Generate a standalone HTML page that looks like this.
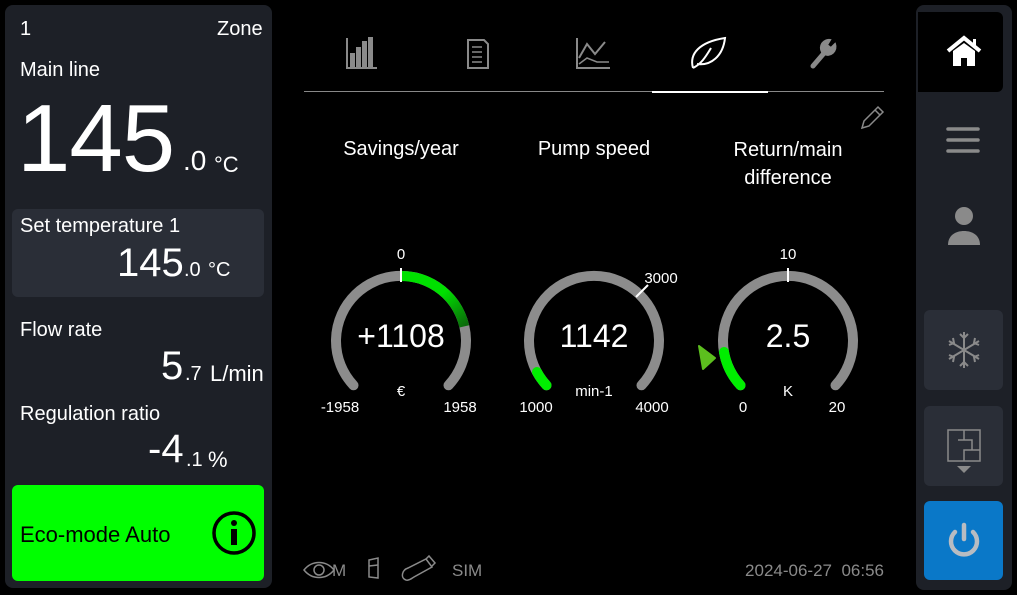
<!DOCTYPE html>
<html><head><meta charset="utf-8"><style>
*{margin:0;padding:0;box-sizing:border-box}
body{width:1017px;height:595px;background:#000;font-family:"Liberation Sans","DejaVu Sans",sans-serif;color:#fff;position:relative;overflow:hidden}
.a{position:absolute;white-space:nowrap}
#left{position:absolute;left:5px;top:5px;width:267px;height:583px;background:#1d2027;border-radius:8px}
#set{position:absolute;left:12px;top:209px;width:252px;height:88px;background:#2a2e37;border-radius:6px}
#eco{position:absolute;left:12px;top:485px;width:252px;height:96px;background:#00ff00;border-radius:6px}
#side{position:absolute;left:916px;top:5px;width:96px;height:585px;background:#1d2027;border-radius:8px}
.btn{position:absolute;left:924px;width:79px;height:80px;background:#2a2e37;border-radius:6px}
</style></head><body>
<div id="left"></div>
<div class="a" style="left:20px;top:18px;font-size:20px">1</div>
<div class="a" style="left:217px;top:18px;font-size:20px">Zone</div>
<div class="a" style="left:20px;top:59px;font-size:20px">Main line</div>
<div class="a" style="left:17px;top:84px;font-size:96px;letter-spacing:-1px;line-height:110px">145</div>
<div class="a" style="left:183px;top:145px;font-size:28px">.0</div>
<div class="a" style="left:214px;top:152px;font-size:22px">°C</div>
<div id="set"></div>
<div class="a" style="left:20px;top:215px;font-size:20px">Set temperature 1</div>
<div class="a" style="left:117px;top:241px;font-size:40px">145</div>
<div class="a" style="left:184px;top:259px;font-size:20px">.0</div>
<div class="a" style="left:208px;top:259px;font-size:20px">°C</div>
<div class="a" style="left:20px;top:319px;font-size:20px">Flow rate</div>
<div class="a" style="left:161px;top:344px;font-size:40px">5</div>
<div class="a" style="left:185px;top:363px;font-size:20px">.7</div>
<div class="a" style="left:210px;top:361px;font-size:22px">L/min</div>
<div class="a" style="left:20px;top:403px;font-size:20px">Regulation ratio</div>
<div class="a" style="left:148px;top:427px;font-size:40px">-4</div>
<div class="a" style="left:186px;top:449px;font-size:20px">.1</div>
<div class="a" style="left:208px;top:447px;font-size:22px">%</div>
<div id="eco"></div>
<div class="a" style="left:20px;top:522px;font-size:22px;color:#000">Eco-mode Auto</div>
<svg class="a" style="left:211px;top:510px" width="46" height="46"><circle cx="23" cy="23" r="20" fill="none" stroke="#000" stroke-width="3.5"/><circle cx="23" cy="13" r="3" fill="#000"/><rect x="20" y="19" width="6" height="16" fill="#000"/></svg>

<svg class="a" style="left:300px;top:30px" width="600" height="70" fill="none" stroke="#8a8a8a" stroke-width="2">
<path d="M47 8V38H77" /><rect x="51" y="24" width="3" height="12" fill="#8a8a8a"/><rect x="57" y="18" width="3" height="18" fill="#8a8a8a"/><rect x="63" y="12" width="3" height="24" fill="#8a8a8a"/><rect x="69" y="8" width="3" height="28" fill="#8a8a8a"/>
<path d="M168 10h16l4 4v24h-20z" /><path d="M172 17h10M172 22h10M172 27h10M172 32h10" stroke-width="1.5"/>
<path d="M277 8V38H310" /><path d="M279 28l8-14 8 10 10-12" /><path d="M279 34l8-6 10 4 12 0" stroke-width="1.5"/>
<path d="M393 38c8-4 12-10 18-20M393 38c-4-14 6-26 32-30c-2 18-14 28-28 26" stroke="#fff"/>
<path d="M513 36l12-14" stroke-width="5" stroke-linecap="round"/><path d="M522 22a8 8 0 0 1 8-12l-3 5 4 3 4-4a8 8 0 0 1-11 10z" fill="#8a8a8a"/>
</svg>
<div class="a" style="left:304px;top:91px;width:580px;height:1px;background:#888"></div>
<div class="a" style="left:652px;top:91px;width:116px;height:2px;background:#fff"></div>
<svg class="a" style="left:858px;top:104px" width="28" height="28" fill="none" stroke="#8a8a8a" stroke-width="1.5"><path d="M4 24l2-7L20 3l5 5L11 22z M17 6l5 5"/></svg>
<div class="a" style="left:301px;top:138px;width:200px;text-align:center;font-size:20px">Savings/year</div>
<div class="a" style="left:494px;top:138px;width:200px;text-align:center;font-size:20px">Pump speed</div>
<div class="a" style="left:688px;top:136px;width:200px;text-align:center;font-size:20px;line-height:28px;white-space:normal">Return/main<br>difference</div>

<svg class="a" style="left:0;top:0" width="1017" height="595" font-family="Liberation Sans, sans-serif" fill="#fff">
<defs><linearGradient id="g1" x1="0" y1="0" x2="1" y2="1"><stop offset="0.5" stop-color="#00e000"/><stop offset="1" stop-color="#0a6a0a"/></linearGradient></defs>
<path d="M353.5 385.3A65 65 0 1 1 448.5 385.3" stroke="#8c8c8c" stroke-width="10" fill="none" stroke-linecap="round"/>
<path d="M401 276A65 65 0 0 1 464.3 326.4" stroke="url(#g1)" stroke-width="10" fill="none"/>
<path d="M401 268V282" stroke="#fff" stroke-width="2"/>
<text x="401" y="259" font-size="15" text-anchor="middle">0</text>
<text x="401" y="347" font-size="32" text-anchor="middle">+1108</text>
<text x="401" y="396" font-size="15" text-anchor="middle">€</text>
<text x="340" y="412" font-size="15" text-anchor="middle">-1958</text>
<text x="460" y="412" font-size="15" text-anchor="middle">1958</text>
<path d="M546.5 385.3A65 65 0 1 1 641.5 385.3" stroke="#8c8c8c" stroke-width="10" fill="none" stroke-linecap="round"/>
<path d="M546.5 385.3A65 65 0 0 1 537 372" stroke="#00ee00" stroke-width="10" fill="none" stroke-linecap="round"/>
<path d="M636 297L648 285" stroke="#fff" stroke-width="2"/>
<text x="661" y="283" font-size="15" text-anchor="middle">3000</text>
<text x="594" y="347" font-size="32" text-anchor="middle">1142</text>
<text x="594" y="396" font-size="15" text-anchor="middle">min-1</text>
<text x="536" y="412" font-size="15" text-anchor="middle">1000</text>
<text x="652" y="412" font-size="15" text-anchor="middle">4000</text>
<path d="M740.5 385.3A65 65 0 1 1 835.5 385.3" stroke="#8c8c8c" stroke-width="10" fill="none" stroke-linecap="round"/>
<path d="M740.5 385.3A65 65 0 0 1 724 352" stroke="#00ee00" stroke-width="10" fill="none" stroke-linecap="round"/>
<path d="M788 268V282" stroke="#fff" stroke-width="2"/>
<path d="M699 346L715 358L703 369Z" fill="#5cbf1e" stroke="#5cbf1e" stroke-width="2" stroke-linejoin="round"/>
<text x="788" y="259" font-size="15" text-anchor="middle">10</text>
<text x="788" y="347" font-size="32" text-anchor="middle">2.5</text>
<text x="788" y="396" font-size="15" text-anchor="middle">K</text>
<text x="743" y="412" font-size="15" text-anchor="middle">0</text>
<text x="837" y="412" font-size="15" text-anchor="middle">20</text>
<g fill="none" stroke="#8a8a8a" stroke-width="1.5">
<path d="M304 570c8-10 22-10 30 0c-8 10-22 10-30 0z"/><circle cx="319" cy="570" r="5"/>
<path d="M369 560l9 -2v20l-9 -1z"/><path d="M369 566l9-1"/>
<path d="M406 580c-6-2-4-10 2-12l18-9 6 8-18 10c-3 2-6 4-8 3z"/><path d="M426 559l3-3 6 7-3 3"/>
</g>
<text x="332" y="576" font-size="17" fill="#8a8a8a">M</text>
<text x="452" y="576" font-size="17" fill="#8a8a8a">SIM</text>
<text x="884" y="576" font-size="17" fill="#8a8a8a" text-anchor="end" style="white-space:pre">2024-06-27  06:56</text>
</svg>

<div id="side"></div>
<div class="a" style="left:918px;top:12px;width:85px;height:80px;background:#000;border-radius:0 6px 6px 0"></div>
<svg class="a" style="left:945px;top:34px" width="38" height="36"><path d="M3 17L19 4L35 17" fill="none" stroke="#fff" stroke-width="4"/><path d="M8 17V32H16V24H22V32H30V17L19 9Z" fill="#fff"/><rect x="28" y="5" width="3" height="7" fill="#fff"/></svg>
<svg class="a" style="left:946px;top:125px" width="34" height="32"><path d="M2 4H32M2 15H32M2 26H32" stroke="#8a8a8a" stroke-width="3.5" stroke-linecap="round"/></svg>
<svg class="a" style="left:946px;top:205px" width="36" height="44"><circle cx="18" cy="11" r="9" fill="#8a8a8a"/><path d="M2 40c0-10 8-14 16-14s16 4 16 14z" fill="#8a8a8a"/></svg>
<div class="btn" style="top:310px"></div>
<svg class="a" style="left:946px;top:330px" width="36" height="40" stroke="#8a8a8a" stroke-width="2" fill="none"><path d="M18 2V38M3 11L33 29M3 29L33 11M14 4l4 4 4-4M14 36l4-4 4 4M3 15l5-2-1-5M33 25l-5 2 1 5M3 25l5 2-1 5M33 15l-5-2 1-5"/></svg>
<div class="btn" style="top:406px"></div>
<svg class="a" style="left:946px;top:428px" width="36" height="50" fill="none" stroke="#8a8a8a" stroke-width="1.5"><path d="M2 2H34V33H2Z M18 2V12H26V22H18V33 M18 12H12 M26 22H34"/><path d="M11 38H25L18 45Z" fill="#8a8a8a" stroke="none"/></svg>
<div class="btn" style="top:501px;height:79px;background:#0a78c8"></div>
<svg class="a" style="left:946px;top:522px" width="36" height="38" fill="none" stroke="#b8bcc2" stroke-width="4.5" stroke-linecap="round"><path d="M18 3V17"/><path d="M9 10a13 13 0 1 0 18 0"/></svg>
</body></html>
